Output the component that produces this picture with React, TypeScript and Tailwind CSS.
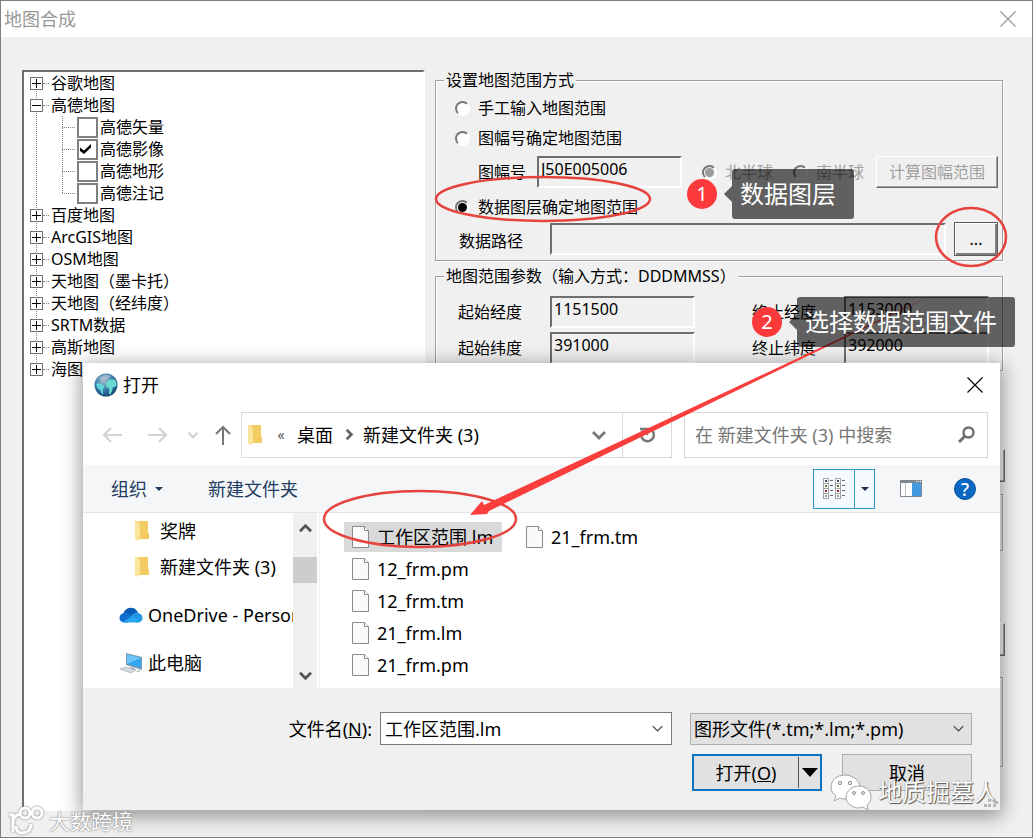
import type { ReactNode } from "react";
import clsx from "clsx";

type TreeItem = {
  label: string;
  children?: { label: string; checked?: boolean }[];
};

const tree: TreeItem[] = [
  { label: "谷歌地图" },
  {
    label: "高德地图",
    children: [
      { label: "高德矢量" },
      { label: "高德影像", checked: true },
      { label: "高德地形" },
      { label: "高德注记" },
    ],
  },
  { label: "百度地图" },
  { label: "ArcGIS地图" },
  { label: "OSM地图" },
  { label: "天地图（墨卡托）" },
  { label: "天地图（经纬度）" },
  { label: "SRTM数据" },
  { label: "高斯地图" },
  { label: "海图" },
];

const files = ["工作区范围.lm", "12_frm.pm", "12_frm.tm", "21_frm.lm", "21_frm.pm", "21_frm.tm"];

/* ---------- classic controls ---------- */

const sunken =
  "h-8 min-w-0 border-2 border-t-[#6e6e6e] border-l-[#6e6e6e] border-r-white border-b-white bg-[#f0f0f0] px-0.5 pb-1.5 text-base leading-5 outline-none";
const raised =
  "border border-t-white border-l-white border-r-[#696969] border-b-[#696969] shadow-[inset_-1px_-1px_0_#a0a0a0] bg-[#f0f0f0]";
const group =
  "mr-0.5 border border-[#a0a0a0] shadow-[1px_1px_0_#fff,inset_1px_1px_0_#fff]";

function Radio({ id, name, checked, disabled }: { id: string; name: string; checked?: boolean; disabled?: boolean }) {
  return (
    <span className="grid size-[15px] shrink-0 place-items-center">
      <input
        id={id}
        name={name}
        type="radio"
        defaultChecked={checked}
        disabled={disabled}
        className={clsx(
          "peer col-start-1 row-start-1 size-[15px] appearance-none rounded-full border-2 border-t-[#777] border-l-[#777] border-r-white border-b-white",
          disabled ? "bg-[#f0f0f0]" : "bg-white",
        )}
      />
      <span
        className={clsx(
          "pointer-events-none col-start-1 row-start-1 hidden size-[9px] rounded-full peer-checked:block",
          disabled ? "bg-[#9c9c9c]" : "bg-black",
        )}
      />
    </span>
  );
}

function TreeCheckbox({ id, checked }: { id: string; checked?: boolean }) {
  return (
    <span className="grid size-[21px] place-items-center">
      <input
        id={id}
        type="checkbox"
        defaultChecked={checked}
        className="peer col-start-1 row-start-1 size-[21px] appearance-none border-2 border-[#808080] bg-white"
      />
      <svg viewBox="0 0 11 10" className="pointer-events-none col-start-1 row-start-1 mr-1 hidden h-2.5 w-[11px] peer-checked:block">
        <path d="M0 3.5 4 6.5 11 0v3.5L4 10 0 7z" fill="#000" />
      </svg>
    </span>
  );
}

function Expander({ open, label }: { open?: boolean; label: string }) {
  return (
    <button type="button" aria-label={label} className="relative size-[13px] border border-[#707070] bg-white">
      <svg viewBox="0 0 11 11" className="size-[11px]" stroke="#000" strokeWidth="1">
        <path d={open ? "M1 5.5h9" : "M1 5.5h9M5.5 1v9"} />
      </svg>
    </button>
  );
}

function MapTree() {
  return (
    <ul className="relative w-[403px] shrink-0 border-2 border-t-[#6e6e6e] border-l-[#6e6e6e] border-r-white border-b-white bg-white pl-1.5">
      <li aria-hidden="true" className="absolute top-3 left-3 h-[286px] border-l border-dotted border-[#808080]" />
      {tree.map((item) => (
        <li key={item.label} className="relative">
          <div className="flex h-[22px] items-center">
            <Expander open={!!item.children} label={item.label} />
            <span className="mr-0.5 w-1.5 border-t border-dotted border-[#808080]" />
            {item.label}
          </div>
          {item.children && (
            <ul className="relative pl-8">
              <li aria-hidden="true" className="absolute top-0 left-8 h-[77px] border-l border-dotted border-[#808080]" />
              {item.children.map((child) => (
                <li key={child.label} className="flex h-[22px] items-center">
                  <span className="mr-0.5 w-[13px] border-t border-dotted border-[#808080]" />
                  <TreeCheckbox id={child.label} checked={child.checked} />
                  <label htmlFor={child.label} className="pl-0.5">
                    {child.label}
                  </label>
                </li>
              ))}
            </ul>
          )}
        </li>
      ))}
    </ul>
  );
}

function RangeMode() {
  return (
    <fieldset className={clsx(group, "pr-1 pb-1")}>
      <legend className="ml-2 bg-[#f0f0f0] px-0.5 leading-5">设置地图范围方式</legend>
      <div className="flex h-8 items-center gap-2 pt-1 pl-[19px]">
        <Radio id="mode-manual" name="mode" />
        <label htmlFor="mode-manual">手工输入地图范围</label>
      </div>
      <div className="flex h-8 items-center gap-2 pl-[19px]">
        <Radio id="mode-sheet" name="mode" />
        <label htmlFor="mode-sheet">图幅号确定地图范围</label>
      </div>
      <div className="flex h-9 items-center pl-[42px]">
        <label htmlFor="sheet" className="w-[59px]">图幅号</label>
        <input id="sheet" defaultValue="J50E005006" className={clsx(sunken, "w-[145px]")} />
        <div className="ml-auto flex items-center gap-2 text-[#a0a0a0]">
          <Radio id="north" name="hemisphere" checked disabled />
          <label htmlFor="north" className="mr-3">北半球</label>
          <Radio id="south" name="hemisphere" disabled />
          <label htmlFor="south">南半球</label>
          <button type="button" disabled className={clsx(raised, "ml-1 h-8 w-[122px]")}>
            计算图幅范围
          </button>
        </div>
      </div>
      <div className="flex h-8 items-center gap-2 pt-0.5 pl-[19px]">
        <Radio id="mode-layer" name="mode" checked />
        <label htmlFor="mode-layer">数据图层确定地图范围</label>
      </div>
      <div className="flex h-[34px] items-center pl-[23px]">
        <label htmlFor="path" className="w-[91px] pt-1">数据路径</label>
        <input id="path" className={clsx(sunken, "flex-1")} />
        <button
          type="button"
          aria-label="浏览"
          className="ml-2 h-[34px] w-11 border border-[#5a5a5a] shadow-[inset_1px_1px_0_#fff,inset_-2px_-2px_0_#808080]"
        >
          ...
        </button>
      </div>
    </fieldset>
  );
}

function RangeParams() {
  const rows = [
    ["起始经度", "1151500", "终止经度", "1153000"],
    ["起始纬度", "391000", "终止纬度", "392000"],
  ];
  return (
    <fieldset className={clsx(group, "mt-[5px] pt-2 pb-1")}>
      <legend className="ml-2 bg-[#f0f0f0] px-0.5 leading-5">地图范围参数（输入方式：DDDMMSS）</legend>
      {rows.map(([a, av, b, bv]) => (
        <div key={a} className="flex h-9 items-center pl-[22px]">
          <label htmlFor={a} className="w-[92px]">{a}</label>
          <input id={a} defaultValue={av} className={clsx(sunken, "mr-[57px] w-[145px]")} />
          <label htmlFor={b} className="w-[92px]">{b}</label>
          <input id={b} defaultValue={bv} className={clsx(sunken, "w-[145px]")} />
        </div>
      ))}
    </fieldset>
  );
}

/* ---------- dialog icons ---------- */

function GlobeIcon() {
  return (
    <svg viewBox="0 0 24 24" className="size-6">
      <defs>
        <radialGradient id="globe" cx="0.4" cy="0.3" r="0.75">
          <stop offset="0" stopColor="#a9bfcc" />
          <stop offset="0.5" stopColor="#3b83ae" />
          <stop offset="1" stopColor="#123f70" />
        </radialGradient>
      </defs>
      <circle cx="12" cy="12" r="11.5" fill="url(#globe)" />
      <path d="M2 11c2-1 6-1 8 2 1 2-2 3-1 5l0 4c-2-2-2-4-3-5-2-1-3-3-4-6z" fill="#5fd6d6" />
      <path d="M12 10c2-3 5-5 9-3 2 3 2 6 0 7l-2 0-1 4-2 4c-2-2 0-5-1-7-2 0-3-2-3-5z" fill="#67d9cf" />
      <path d="M5 6c3-4 8-5 12-3l-3 3-5 1z" fill="#b7bfd0" opacity="0.7" />
    </svg>
  );
}

function FolderIcon() {
  return (
    <svg viewBox="0 0 16 22" className="h-[22px] w-4 shrink-0">
      <path d="M3 1h11v12h1v6H5z" fill="#f2cb62" />
      <path d="M1 1h4v16l-1 4-3-2z" fill="#fde08a" />
      <path d="M1 1l5 3v13l-2 4-3-2z" fill="#fbe49b" />
    </svg>
  );
}

function FileIcon() {
  return (
    <svg viewBox="0 0 17 22" className="h-[22px] w-[17px] shrink-0">
      <path d="M.5.5h12l4 4v17H.5z" fill="#f8fafb" stroke="#8a8a8a" />
      <path d="M12.500.5v4h4" fill="#fff" stroke="#8a8a8a" />
    </svg>
  );
}

function CloudIcon() {
  return (
    <svg viewBox="0 0 24 16" className="h-4 w-6 shrink-0">
      <path d="M4 8C5 3 9 0 13 1c3 0 5 2 6 5L9 11z" fill="#0a5cb4" />
      <path d="M5 15.500C-1 15-1 7 5 6c3-1 5 1 7 2l-3 7.500z" fill="#0f6fce" />
      <path d="M12 9c2-3 4-4 7-3 6 1 6 9 0 9.500L9 14z" fill="#2196e3" />
      <path d="M4 15l9-6 9 5c-1 1-2 1.500-3 1.500H5z" fill="#28a3ee" />
    </svg>
  );
}

function ComputerIcon() {
  return (
    <svg viewBox="0 0 24 22" className="h-[22px] w-6 shrink-0">
      <path d="M7 1l16 4v13L7 13z" fill="#7d99ac" />
      <path d="M8 2.500l14 3.500v10L8 12z" fill="#35a7f0" />
      <path d="M8 2.500l14 3.500-14 6z" fill="#6cc5fa" />
      <path d="M11 15l5 1.500v2l-4-1z" fill="#9aa7b0" />
      <path d="M1 17l6-2 10 3-5 3z" fill="#d5dadd" stroke="#9ba3a8" strokeWidth="0.6" />
      <path d="M17 19l3-1 2 1-3 1.500z" fill="#b8bfc4" />
    </svg>
  );
}

function Chevron({ d, size = 14, color = "#777", width = 2.5 }: { d: string; size?: number; color?: string; width?: number }) {
  return (
    <svg width={size} height={size} viewBox="0 0 14 14" fill="none" stroke={color} strokeWidth={width} className="shrink-0">
      <path d={d} />
    </svg>
  );
}

const DOWN = "M1 4l6 6 6-6";
const UP = "M1 10l6-6 6 6";
const RIGHT = "M4 2l5 5-5 5";

function IconButton({ label, className, children }: { label: string; className?: string; children: ReactNode }) {
  return (
    <button type="button" aria-label={label} className={clsx("flex items-center justify-center", className)}>
      {children}
    </button>
  );
}

/* ---------- open dialog ---------- */

function AddressRow() {
  return (
    <div className="flex h-[59px] items-center pt-1.5 pr-3 pb-2 pl-[18px]">
      <IconButton label="后退" className="w-[22px]">
        <svg viewBox="0 0 20 16" className="h-4 w-5" fill="none" stroke="#d4d4d4" strokeWidth="2.2">
          <path d="M20 8H2M9 1L2 8l7 7" />
        </svg>
      </IconButton>
      <IconButton label="前进" className="ml-6 w-[22px]">
        <svg viewBox="0 0 20 16" className="h-4 w-5" fill="none" stroke="#d4d4d4" strokeWidth="2.2">
          <path d="M0 8h18M11 1l7 7-7 7" />
        </svg>
      </IconButton>
      <IconButton label="最近浏览的位置" className="ml-4 w-4">
        <Chevron d={DOWN} size={10} color="#d0d0d0" width={3} />
      </IconButton>
      <IconButton label="上移" className="ml-3.5 w-4">
        <svg viewBox="0 0 16 20" className="h-5 w-4" fill="none" stroke="#777" strokeWidth="2">
          <path d="M8 20V2M1 9l7-7 7 7" />
        </svg>
      </IconButton>
      <div className="ml-2.5 flex h-[46px] flex-1 items-center border border-[#d9d9d9] pl-[5px]">
        <FolderIcon />
        <span className="ml-2.5 w-4 text-center text-sm leading-5 text-[#555]">«</span>
        <a href="#desktop" className="ml-1 px-1">桌面</a>
        <span className="mx-1.5">
          <Chevron d={RIGHT} size={13} color="#666" width={3} />
        </span>
        <a href="#folder" className="pl-px">新建文件夹 (3)</a>
        <IconButton label="以前的位置" className="mr-4 ml-auto">
          <Chevron d={DOWN} width={2.8} />
        </IconButton>
        <IconButton label="刷新" className="h-full w-[49px] border-l border-[#d9d9d9]">
          <svg viewBox="0 0 18 18" className="size-[18px]" fill="none" stroke="#777" strokeWidth="2.6">
            <path d="M4.500 5a6.300 6.300 0 1 0 10 0M2 3h7v6" />
          </svg>
        </IconButton>
      </div>
      <div className="ml-3 flex h-[46px] w-[304px] items-center border border-[#d9d9d9] pr-3 pl-2.5">
        <input
          aria-label="搜索"
          placeholder="在 新建文件夹 (3) 中搜索"
          className="min-w-0 flex-1 outline-none placeholder:text-[#767676]"
        />
        <svg viewBox="0 0 17 17" className="size-[17px]" fill="none" stroke="#6e6e6e">
          <circle cx="10.500" cy="6.500" r="5" strokeWidth="2.4" />
          <path d="M7 10l-6 6" strokeWidth="3" />
        </svg>
      </div>
    </div>
  );
}

function ViewIcon() {
  return (
    <svg viewBox="0 0 22 22" className="size-[22px]">
      {[0, 12].map((x) =>
        [0, 5, 10, 15].map((y, i) => (
          <g key={`${x}-${y}`}>
            <rect x={x + 0.5} y={y + 0.5} width="5" height="5" fill="#fff" stroke="#a3a3a3" />
            <rect x={x + 2} y={y + 2} width="2" height="2" fill={["#444", "#5b7a3a", "#a02020", "#8aa08a"][i]} />
            <path d={`M${x + 7} ${y + 2.5}h3`} stroke="#666" />
          </g>
        )),
      )}
    </svg>
  );
}

function Toolbar() {
  return (
    <div className="flex h-12 items-center border-b border-[#e3e6e8] bg-[#f4f6f8] pr-6 pl-7 text-[#1e3c5f]">
      <button type="button" className="flex items-center gap-2">
        组织
        <svg viewBox="0 0 8 4" className="h-1 w-2" fill="#1e3c5f">
          <path d="M0 0h8L4 4z" />
        </svg>
      </button>
      <button type="button" className="ml-[45px]">新建文件夹</button>
      <div className="ml-auto flex h-10 border border-[#3399cc] bg-[#f5faff]">
        <IconButton label="更改视图" className="w-10">
          <ViewIcon />
        </IconButton>
        <IconButton label="更多选项" className="w-5 border-l border-[#3399cc]">
          <svg viewBox="0 0 8 4" className="h-1 w-2" fill="#1b2d4a">
            <path d="M0 0h8L4 4z" />
          </svg>
        </IconButton>
      </div>
      <IconButton label="预览窗格" className="ml-[25px]">
        <svg viewBox="0 0 22 17" className="h-[17px] w-[22px]">
          <path d="M.5.5h21v16H.5z" fill="#fff" stroke="#808891" />
          <path d="M0 0h22v3H0z" fill="#808891" />
          <path d="M5.500 3v13" stroke="#b8bfc6" />
          <path d="M12 3h9v13h-9z" fill="#429ae0" />
          <path d="M16 1h1v1h-1zM18 1h1v1h-1zM20 1h1v1h-1z" fill="#fff" />
        </svg>
      </IconButton>
      <IconButton
        label="获取帮助"
        className="ml-8 size-[22px] rounded-full border border-[#0a4f96] bg-[#0a68c4] font-medium text-white"
      >
        ?
      </IconButton>
    </div>
  );
}

function FilePane() {
  return (
    <div className="flex h-[175px] bg-white">
      <ul className="w-[210px] shrink-0 overflow-hidden whitespace-nowrap">
        <li className="flex h-9 items-center gap-2.5 pl-[51px]">
          <FolderIcon />
          奖牌
        </li>
        <li className="mb-1.5 flex h-9 items-center gap-2.5 pl-[51px]">
          <FolderIcon />
          新建文件夹 (3)
        </li>
        <li className="flex h-12 items-center gap-[5px] pl-9">
          <CloudIcon />
          OneDrive - Personal
        </li>
        <li className="flex h-12 items-center gap-[5px] pl-9">
          <ComputerIcon />
          此电脑
        </li>
      </ul>
      <div className="flex w-6 shrink-0 flex-col items-center bg-[#f0f0f0]">
        <IconButton label="向上滚动" className="h-[30px] w-full">
          <Chevron d={UP} size={13} color="#555" width={3} />
        </IconButton>
        <div className="mt-3.5 h-[26px] w-full bg-[#cdcdcd]" />
        <IconButton label="向下滚动" className="mt-auto h-[26px] w-full">
          <Chevron d={DOWN} size={13} color="#555" width={3} />
        </IconButton>
      </div>
      <ul className="ml-0.5 grid flex-1 grid-flow-col grid-cols-[158px_158px] grid-rows-[repeat(5,30px)] content-start gap-x-4 gap-y-0.5 border-l border-[#f2f2f2] pt-[9px] pl-6">
        {files.map((name, i) => (
          <li key={name}>
            <button type="button" className={clsx("flex h-[30px] w-full items-center gap-2 pl-2", i === 0 && "bg-[#d9d9d9]")}>
              <FileIcon />
              {name}
            </button>
          </li>
        ))}
      </ul>
    </div>
  );
}

function DialogFooter() {
  return (
    <div className="flex-1 bg-[#f0f0f0] pt-6 pr-7">
      <div className="flex items-center justify-end">
        <label htmlFor="filename" className="mr-2">
          文件名(<u>N</u>):
        </label>
        <div className="flex h-[33px] w-[292px] items-center border border-[#7a7a7a] bg-white pr-2 pl-1">
          <input id="filename" defaultValue="工作区范围.lm" className="min-w-0 flex-1 outline-none" />
          <IconButton label="文件名列表">
            <Chevron d={DOWN} size={11} color="#444" width={1.6} />
          </IconButton>
        </div>
        <div className="ml-[18px] grid w-[282px] items-center">
          <select
            aria-label="文件类型"
            className="col-start-1 row-start-1 h-8 w-full appearance-none border border-[#adadad] bg-[#e1e1e1] pl-[3px]"
          >
            <option>图形文件(*.tm;*.lm;*.pm)</option>
          </select>
          <span className="pointer-events-none col-start-1 row-start-1 mr-2 justify-self-end">
            <Chevron d={DOWN} size={11} color="#444" width={1.6} />
          </span>
        </div>
      </div>
      <div className="mt-[9px] flex justify-end gap-5">
        <div className="flex h-[37px] w-[130px] items-stretch border-2 border-[#0f73c0] bg-[#e1e1e1]">
          <button type="button" className="flex-1">
            打开(<u>O</u>)
          </button>
          <IconButton label="打开方式" className="my-px w-[22px] border-l border-[#555]">
            <svg viewBox="0 0 16 9" className="h-[9px] w-4">
              <path d="M0 0h16L8 9z" />
            </svg>
          </IconButton>
        </div>
        <button type="button" className="h-[37px] w-[130px] border border-[#adadad] bg-[#e1e1e1]">
          取消
        </button>
      </div>
    </div>
  );
}

function OpenDialog() {
  return (
    <section
      role="dialog"
      aria-label="打开"
      className="absolute top-[362px] right-[32px] left-[82px] flex h-[447px] flex-col bg-white text-lg leading-6 shadow-[0_4px_18px_2px_rgba(0,0,0,0.4)]"
    >
      <header className="flex h-[43px] items-center pr-[17px] pl-[11px]">
        <GlobeIcon />
        <h2 className="ml-[5px]">打开</h2>
        <IconButton label="关闭" className="ml-auto">
          <svg viewBox="0 0 16 16" className="size-4" stroke="#000" strokeWidth="1.200">
            <path d="M.5.5l15 15M15.500.5l-15 15" />
          </svg>
        </IconButton>
      </header>
      <AddressRow />
      <Toolbar />
      <FilePane />
      <DialogFooter />
    </section>
  );
}

/* ---------- annotations ---------- */

function Marks() {
  return (
    <svg width="1033" height="838" className="pointer-events-none absolute -top-px -left-px" aria-hidden="true">
      <g fill="none" stroke="#e6423e" strokeWidth="2.500">
        <ellipse cx="543" cy="199" rx="107" ry="22" />
        <ellipse cx="971" cy="237" rx="35" ry="29" />
        <ellipse cx="420" cy="519" rx="96" ry="28" />
      </g>
      <path d="M470 515l12-14 2 4L937 293 489 511l-2 3z" fill="#fa3e3c" />
    </svg>
  );
}

function Callout({ n, text, className }: { n: number; text: string; className: string }) {
  return (
    <div className={clsx("pointer-events-none absolute flex items-center text-white", className)}>
      <span className="flex size-[30px] items-center justify-center rounded-full bg-[#fc3a3c] text-xl leading-6">{n}</span>
      <svg viewBox="0 0 8 16" className="ml-[7px] h-4 w-2" fill="#000" fillOpacity="0.6">
        <path d="M8 0v16L0 8z" />
      </svg>
      <span className="flex h-[50px] items-center rounded-[3px] bg-black/60 pr-[18px] pl-2 text-2xl leading-8">{text}</span>
    </div>
  );
}

function Watermarks() {
  return (
    <>
      <div className="pointer-events-none absolute right-[34px] bottom-[27px] flex items-center gap-1.5">
        <svg viewBox="0 0 42 36" className="h-9 w-[42px]" fill="#fff" stroke="#8f8f8f" strokeWidth="0.8">
          <path d="M15 1C7 1 1 6 1 13c0 4 2 7 5 9l-2 5 6-3c2 1 4 1 6 1 8 0 14-6 14-12S23 1 15 1z" />
          <path d="M29 12c-7 0-13 5-13 11s6 11 13 11l4-1 5 3-1-5c3-2 4-5 4-8 0-6-5-11-12-11z" />
          <g fill="#e8e8e8" stroke="#777">
            <circle cx="10" cy="9" r="1.700" />
            <circle cx="20" cy="9" r="1.700" />
            <circle cx="24" cy="19" r="1.500" />
            <circle cx="33" cy="19" r="1.500" />
          </g>
        </svg>
        <span className="text-2xl leading-8 text-white [text-shadow:1px_1px_1px_#555,0_0_1px_#777]">地质掘墓人</span>
      </div>
      <svg viewBox="0 0 12 8" className="pointer-events-none absolute right-[36px] bottom-[30px] h-2 w-3" fill="#b5b5b5">
        <path d="M9 0h3v3H9zM4 0h3v3H4zM0 5h3v3H0zM4 5h3v3H4zM9 5h3v3H9z" />
      </svg>
      <div className="pointer-events-none absolute bottom-px left-[6px] flex items-center gap-1">
        <svg viewBox="0 0 38 30" className="h-[30px] w-[38px] drop-shadow-[0_0_1px_#777]" fill="none" stroke="#fff" strokeWidth="3">
          <path d="M2 9h4v17M6 14c2-4 4-6 8-6M24 18c0 6-4 9-9 9s-6-3-6-7" />
          <circle cx="18" cy="7" r="5" />
          <circle cx="30" cy="7" r="5" />
        </svg>
        <span className="text-[21px] leading-6 text-white [text-shadow:0_0_2px_#777,0_0_1px_#999]">大数跨境</span>
      </div>
    </>
  );
}

export default function App() {
  return (
    <div className="relative flex min-h-screen flex-col overflow-hidden border border-[#808080] bg-[#f0f0f0] font-['Noto_Sans','Noto_Sans_CJK_SC',sans-serif] text-base leading-5 text-black">
      <header className="flex h-9 items-center justify-between bg-white pr-4 pl-[3px]">
        <h1 className="text-lg leading-6 text-[#999]">地图合成</h1>
        <IconButton label="关闭窗口">
          <svg viewBox="0 0 16 16" className="size-4" stroke="#999" strokeWidth="1.200">
            <path d="M.5.5l15 15M15.500.5l-15 15" />
          </svg>
        </IconButton>
      </header>

      <main className="flex flex-1 gap-2.5 pt-[33px] pr-[27px] pb-[26px] pl-[21px]">
        <MapTree />
        <div className="flex min-w-0 flex-1 flex-col">
          <RangeMode />
          <RangeParams />
          {/* lower part of the form, mostly behind the dialog */}
          <div className={clsx(raised, "mt-[78px] h-[33px] w-[122px] self-end")} />
          <div className={clsx(group, "mt-3 h-[57px]")} />
          <div className={clsx(raised, "mt-[72px] h-[33px] w-[122px] self-end")} />
          <div className={clsx(group, "mt-[21px] h-[90px]")} />
          <div className="mt-2.5 flex gap-[51px] pl-[149px]">
            <div className={clsx(raised, "h-[33px] w-[113px]")} />
            <div className={clsx(raised, "h-[33px] w-[113px]")} />
          </div>
        </div>
      </main>

      <OpenDialog />
      <Marks />
      <Callout n={1} text="数据图层" className="top-[168px] left-[686px]" />
      <Callout n={2} text="选择数据范围文件" className="top-[296px] left-[751px]" />
      <Watermarks />
    </div>
  );
}
